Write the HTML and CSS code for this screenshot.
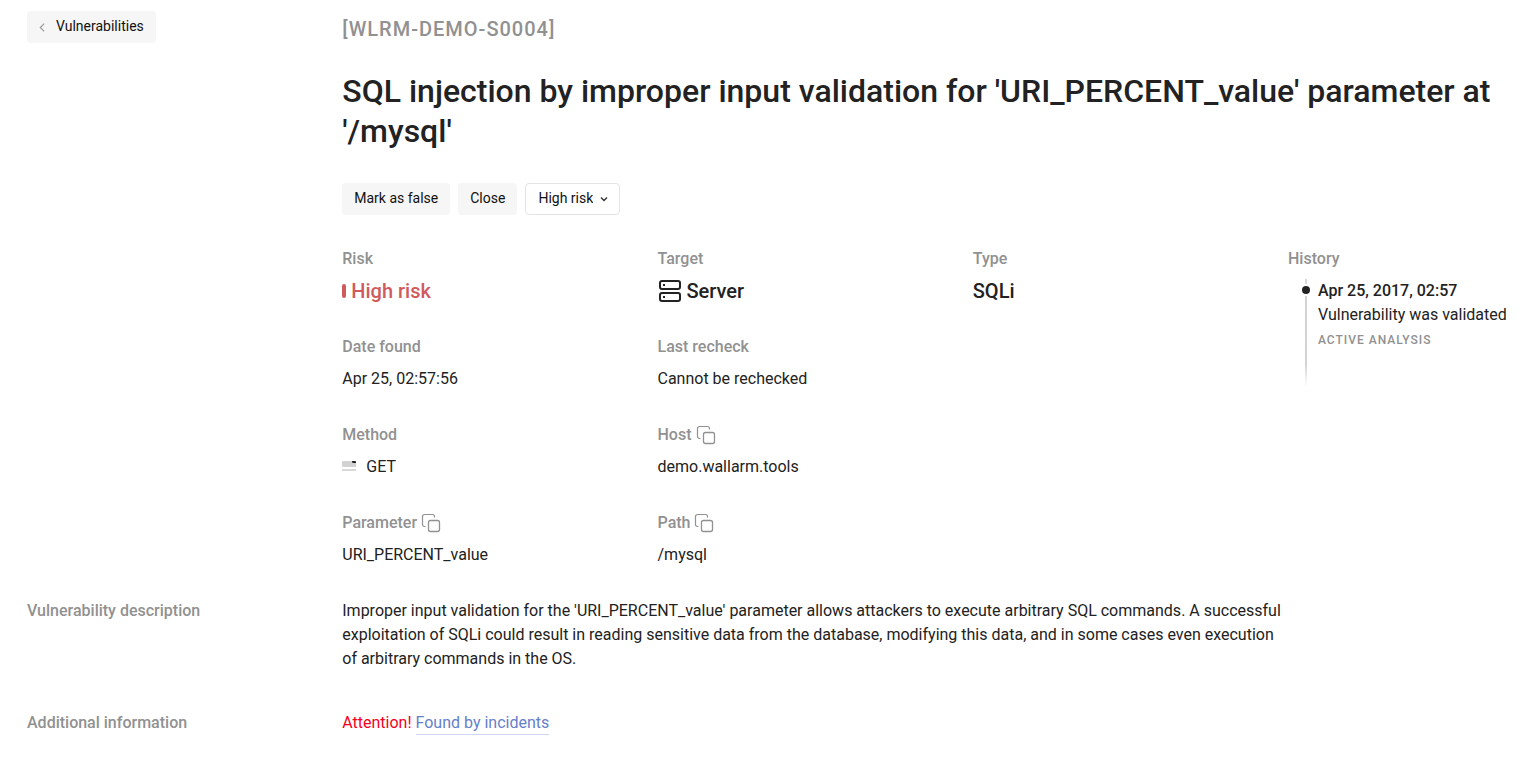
FILE: index.html
```html
<!DOCTYPE html>
<html lang="en">
<head>
<meta charset="utf-8">
<meta name="viewport" content="width=device-width, initial-scale=1">
<title>Vulnerability WLRM-DEMO-S0004</title>
<link rel="stylesheet" href="styles.css">
</head>
<body>
<svg class="sprite" width="0" height="0" aria-hidden="true">
  <symbol id="copy" viewBox="0 0 20 20">
    <path d="M4.500 13.500H3.500a2 2 0 0 1-2-2v-8a2 2 0 0 1 2-2h8a2 2 0 0 1 2 2v1" fill="none" stroke="currentColor" stroke-width="1.200"/>
    <rect x="7.500" y="7.500" width="11" height="11" rx="2" fill="none" stroke="currentColor" stroke-width="1.300"/>
  </symbol>
</svg>
<div class="page">
  <nav class="side">
    <button class="button back" type="button">
      <svg class="back-icon" viewBox="0 0 6 8" aria-hidden="true"><path d="M4.500.5 1 4l3.500 3.500" fill="none" stroke="currentColor"/></svg>
      Vulnerabilities
    </button>
  </nav>
  <header class="summary">
    <div class="code">[WLRM-DEMO-S0004]</div>
    <h1 class="title">SQL injection by improper input validation for 'URI_PERCENT_value' parameter at '/mysql'</h1>
    <div class="actions">
      <button class="button" type="button">Mark as false</button>
      <button class="button" type="button">Close</button>
      <div class="risk-picker">
        <select class="risk-select" aria-label="Risk level"><option>High risk</option></select>
        <svg class="chevron" viewBox="0 0 8 6" aria-hidden="true"><path d="M1 1.500l3 3 3-3" fill="none" stroke="currentColor" stroke-width="1.400"/></svg>
      </div>
    </div>
  </header>

  <dl class="details">
    <div class="field">
      <dt class="label">Risk</dt>
      <dd class="value large danger"><span class="risk-bar"></span>High risk</dd>
    </div>
    <div class="field">
      <dt class="label">Target</dt>
      <dd class="value large">
        <svg class="server-icon" viewBox="0 0 24 24" aria-hidden="true">
          <g fill="none" stroke="currentColor" stroke-width="2"><rect x="2" y="2" width="20" height="8" rx="2"/><rect x="2" y="14" width="20" height="8" rx="2"/></g>
          <path d="M5 5h2v2H5zM5 17h2v2H5z" fill="currentColor"/>
        </svg>Server
      </dd>
    </div>
    <div class="field">
      <dt class="label">Type</dt>
      <dd class="value large">SQLi</dd>
    </div>
    <div class="field first">
      <dt class="label">Date found</dt>
      <dd class="value">Apr 25, 02:57:56</dd>
    </div>
    <div class="field">
      <dt class="label">Last recheck</dt>
      <dd class="value">Cannot be rechecked</dd>
    </div>
    <div class="field first">
      <dt class="label">Method</dt>
      <dd class="value method">
        <svg class="method-icon" viewBox="0 0 16 16" aria-hidden="true">
          <rect x="0" y="2" width="14" height="6" rx="1" fill="#d2d2d2"/>
          <path d="M10 2h3a1 1 0 0 1 1 1v1h-3.500z" fill="#222"/>
          <rect x="0" y="10" width="14" height="2" fill="#d9d9d9"/>
        </svg>GET
      </dd>
    </div>
    <div class="field">
      <dt class="label">Host <button class="copy" type="button" aria-label="Copy host"><svg class="copy-icon"><use href="#copy"/></svg></button></dt>
      <dd class="value">demo.wallarm.tools</dd>
    </div>
    <div class="field first">
      <dt class="label">Parameter <button class="copy" type="button" aria-label="Copy parameter"><svg class="copy-icon"><use href="#copy"/></svg></button></dt>
      <dd class="value">URI_PERCENT_value</dd>
    </div>
    <div class="field">
      <dt class="label">Path <button class="copy" type="button" aria-label="Copy path"><svg class="copy-icon"><use href="#copy"/></svg></button></dt>
      <dd class="value">/mysql</dd>
    </div>
  </dl>

  <aside class="history">
    <h2 class="label">History</h2>
    <div class="timeline">
      <div class="track">
        <span class="track-top"></span>
        <span class="dot"></span>
        <span class="track-line"></span>
      </div>
      <div class="event">
        <div class="event-date">Apr 25, 2017, 02:57</div>
        <div class="event-text">Vulnerability was validated</div>
        <div class="event-source">ACTIVE ANALYSIS</div>
      </div>
    </div>
  </aside>

  <h2 class="label section-name">Vulnerability description</h2>
  <p class="section-text">Improper input validation for the 'URI_PERCENT_value' parameter allows attackers to execute arbitrary SQL commands. A successful exploitation of SQLi could result in reading sensitive data from the database, modifying this data, and in some cases even execution of arbitrary commands in the OS.</p>

  <h2 class="label section-name extra">Additional information</h2>
  <p class="section-text extra"><span class="attention">Attention!</span> <a class="link" href="#incidents">Found by incidents</a></p>
</div>
</body>
</html>
```
FILE: styles.css
```css
* {
  box-sizing: border-box;
}

body {
  margin: 0;
  background: #fff;
  color: #222;
  font-family: Roboto, "Liberation Sans", sans-serif;
  font-size: 16px;
  line-height: 24px;
}

h1, h2, p, dl, dd {
  margin: 0;
}

.sprite {
  position: absolute;
}

.page {
  display: grid;
  grid-template-columns: repeat(4, minmax(0, 1fr)) 219px;
  padding: 11px 24px 24px 27px;
}

.side {
  grid-column: 1;
}

.summary {
  grid-column: 2 / -1;
  padding-top: 4px;
}

.button {
  display: flex;
  align-items: center;
  height: 32px;
  padding: 0 12px 2px;
  border: 0;
  border-radius: 4px;
  background: #f6f6f6;
  color: #111;
  font: inherit;
  font-size: 14px;
}

.back {
  gap: 10px;
}

.back-icon {
  width: 7px;
  height: 9px;
  margin-top: 2px;
  color: #999;
}

.code {
  color: #919191;
  font-size: 20px;
  font-weight: 500;
  line-height: 28px;
  letter-spacing: 1px;
}

.title {
  margin-top: 28px;
  font-size: 32px;
  font-weight: 500;
  line-height: 40px;
}

.actions {
  display: flex;
  gap: 8px;
  margin-top: 32px;
}

.risk-picker {
  position: relative;
}

.risk-select {
  appearance: none;
  height: 32px;
  padding: 0 26px 2px 12px;
  border: 1px solid #e4e4e4;
  border-radius: 4px;
  background: #fff;
  color: #111;
  font: inherit;
  font-size: 14px;
}

.chevron {
  position: absolute;
  top: 13px;
  right: 12px;
  width: 8px;
  height: 6px;
  color: #333;
  pointer-events: none;
}

.details {
  display: grid;
  grid-column: 2 / 5;
  grid-template-columns: repeat(3, minmax(0, 1fr));
  row-gap: 32px;
  margin-top: 32px;
}

.field {
  display: grid;
  row-gap: 8px;
}

.first {
  grid-column-start: 1;
}

.label {
  display: flex;
  align-items: center;
  gap: 4px;
  height: 24px;
  color: #919191;
  font-size: 16px;
  font-weight: 500;
}

.value {
  display: flex;
  align-items: center;
  height: 24px;
}

.large {
  font-size: 20px;
  font-weight: 500;
}

.danger {
  color: #d05a5c;
}

.risk-bar {
  width: 4px;
  height: 14px;
  margin-right: 5px;
  border-radius: 2px;
  background: currentColor;
}

.server-icon {
  width: 24px;
  height: 24px;
  margin-right: 5px;
}

.method-icon {
  width: 16px;
  height: 16px;
  margin-right: 8px;
}

.copy {
  display: flex;
  padding: 0;
  border: 0;
  background: none;
  color: inherit;
}

.copy-icon {
  width: 20px;
  height: 20px;
}

.history {
  grid-column: 5;
  margin-top: 32px;
  white-space: nowrap;
}

.timeline {
  display: flex;
  gap: 8px;
  margin-top: 8px;
  padding-left: 14px;
}

.track {
  display: flex;
  flex-direction: column;
  align-items: center;
  height: 108px;
}

.track-top {
  width: 2px;
  height: 5px;
  background: #d9d9d9;
}

.dot {
  width: 8px;
  height: 8px;
  margin: 2px 0;
  border-radius: 50%;
  background: #222;
}

.track-line {
  flex: 1;
  width: 2px;
  background: linear-gradient(#d3d3d3 75%, transparent);
}

.event-date {
  font-weight: 500;
}

.event-source {
  color: #919191;
  font-size: 12px;
  font-weight: 500;
  line-height: 26px;
  letter-spacing: 1px;
}

.section-name {
  grid-column: 1;
  margin-top: 32px;
}

.section-text {
  grid-column: 2 / 5;
  margin-top: 32px;
}

.extra {
  margin-top: 40px;
}

.attention {
  color: #f5001d;
}

.link {
  padding-bottom: 2px;
  border-bottom: 1px solid #ccd6ee;
  color: #6680c9;
  text-decoration: none;
}
```
